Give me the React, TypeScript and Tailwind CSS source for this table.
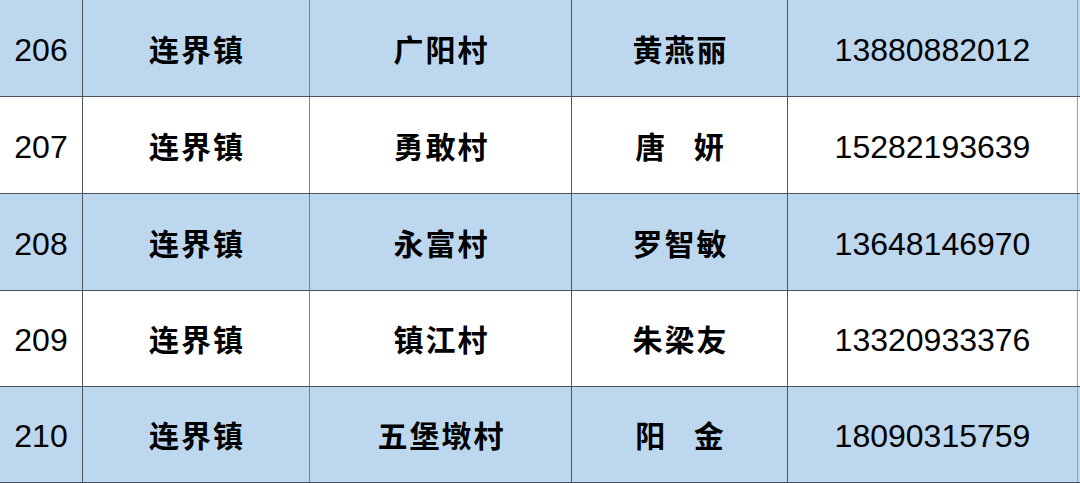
const rows = [
  { no: '206', town: '连界镇', village: '广阳村', name: '黄燕丽', phone: '13880882012' },
  { no: '207', town: '连界镇', village: '勇敢村', name: '唐\u00a0\u00a0\u00a0妍', phone: '15282193639' },
  { no: '208', town: '连界镇', village: '永富村', name: '罗智敏', phone: '13648146970' },
  { no: '209', town: '连界镇', village: '镇江村', name: '朱梁友', phone: '13320933376' },
  { no: '210', town: '连界镇', village: '五堡墩村', name: '阳\u00a0\u00a0\u00a0金', phone: '18090315759' },
];

const heights = ['h-[96px]', 'h-[96px]', 'h-[96px]', 'h-[95px]', 'h-[95px]'];

const num = "font-['Liberation_Sans','Helvetica',sans-serif] text-[32px] pt-[3px]";
const cjk = "font-['Noto_Sans_CJK_SC',sans-serif] font-semibold text-[30px] tracking-[2px] pl-[2px]";

export default function App() {
  return (
    <div className="w-[1080px] h-[483px] overflow-hidden bg-white text-black">
      {rows.map((r, i) => (
        <div
          key={r.no}
          className={`flex ${heights[i]} border-b border-[#4b525c] box-content ${
            i % 2 === 0 ? 'bg-[#bdd7ee]' : 'bg-white'
          }`}
        >
          <div className={`w-[83px] flex items-center justify-center border-r border-[#4f5662] ${num}`}>
            {r.no}
          </div>
          <div className={`w-[227px] flex items-center justify-center border-r border-[#7d848f] ${cjk}`}>
            {r.town}
          </div>
          <div className={`w-[262px] flex items-center justify-center border-r border-[#4f5662] ${cjk}`}>
            {r.village}
          </div>
          <div className={`w-[216px] flex items-center justify-center border-r border-[#4f5662] ${cjk} whitespace-pre`}>
            {r.name}
          </div>
          <div className={`w-[290px] flex items-center justify-center border-r border-[#9aa0a8] ${num}`}>
            {r.phone}
          </div>
        </div>
      ))}
    </div>
  );
}
